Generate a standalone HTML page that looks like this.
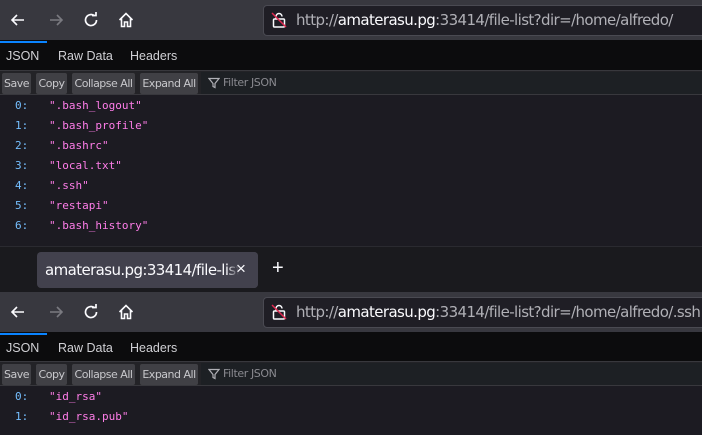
<!DOCTYPE html>
<html><head><style>
*{margin:0;padding:0;box-sizing:border-box}
body{width:702px;height:435px;overflow:hidden;background:#1c1b22;font-family:"Liberation Sans","DejaVu Sans",sans-serif;position:relative}
.abs{position:absolute}
.tb{left:0;width:702px;height:40px;background:#38383f}
.url{left:263px;width:445px;height:31px;background:#1f1e25;border:1px solid #4a4a52;border-radius:4px;color:#b0b0b6;font-size:15px;line-height:29px;padding-left:32px;white-space:nowrap;font-family:"DejaVu Sans",sans-serif;letter-spacing:-0.6px}
.url b{font-weight:normal;color:#fbfbfe}
.tabs{left:0;width:702px;height:30px;background:#0c0c0d;color:#d0d0d4;font-size:12.5px}
.tabs span{position:absolute;top:9px}
.bar{left:0;width:702px;height:25px;background:#232327;border-top:1px solid #38383d;border-bottom:1px solid #38383d}
.btn{position:absolute;top:2px;height:21px;background:#404045;color:#c8c8cc;font-size:11px;line-height:21px;text-align:center;border-radius:2px;font-family:"DejaVu Sans",sans-serif;letter-spacing:-0.5px}
.filter{position:absolute;left:201px;top:1px;right:0;height:22px;background:#1d2024;color:#8a8a90;font-size:11px;line-height:22px;padding-left:22px;font-family:"DejaVu Sans",sans-serif;letter-spacing:-0.4px}
.row{position:absolute;font-family:"DejaVu Sans Mono","Liberation Mono",monospace;font-size:11px;height:20px;line-height:20px}
.k{position:absolute;left:15px;color:#75bfff}
.v{position:absolute;left:49px;color:#ff7de9;white-space:nowrap}
svg{position:absolute}
</style></head><body>

<div class="abs tb" style="top:0"></div>
<svg style="left:8px;top:10px" width="20" height="20" viewBox="0 0 20 20" fill="none" stroke="#fbfbfe" stroke-width="1.6"><path d="M16 10H4M9 5L4 10L9 15"/></svg>
<svg style="left:46px;top:10px" width="20" height="20" viewBox="0 0 20 20" fill="none" stroke="#7a7a80" stroke-width="1.6"><path d="M4 10H16M11 5L16 10L11 15"/></svg>
<svg style="left:82px;top:11px" width="18" height="18" viewBox="0 0 18 18" fill="none" stroke="#fbfbfe" stroke-width="1.7"><path d="M14.5 9A5.5 5.5 0 1 1 12.5 4.8"/><path d="M10 4.5H14V1" /></svg>
<svg style="left:117px;top:11px" width="18" height="18" viewBox="0 0 18 18" fill="none" stroke="#fbfbfe" stroke-width="1.6"><path d="M2.5 9L9 2.5L15.5 9M4.5 7.5V15.5H7.5V11H10.5V15.5H13.5V7.5"/></svg>
<div class="abs url" style="top:5px">http://<b>amaterasu.pg</b>:33414/file-list?dir=/home/alfredo/</div>
<svg style="left:270px;top:11px" width="18" height="18" viewBox="0 0 18 18" fill="none" stroke-width="1.5"><rect x="3.5" y="8" width="11" height="8" rx="1" stroke="#fbfbfe"/><path d="M6 8V5.5a3 3 0 0 1 6 0" stroke="#fbfbfe"/><path d="M2 2L16 16" stroke="#e22850"/></svg>

<div class="abs tabs" style="top:40px"><div class="abs" style="left:0;top:1px;width:47px;height:2px;background:#0a84ff"></div><span style="left:6px">JSON</span><span style="left:58px">Raw Data</span><span style="left:130px">Headers</span></div>
<div class="abs bar" style="top:70px">
<div class="btn" style="left:2px;width:29px">Save</div>
<div class="btn" style="left:36px;width:31px">Copy</div>
<div class="btn" style="left:72px;width:63px">Collapse All</div>
<div class="btn" style="left:140px;width:58px">Expand All</div>
<div class="filter">Filter JSON</div>
<svg style="left:208px;top:6px" width="12" height="12" viewBox="0 0 12 12" fill="none" stroke="#b0b0b6" stroke-width="1.2"><path d="M1 1.5H11L7 6.5V10.5L5 9.5V6.5Z"/></svg>
</div>
<div class="row" style="top:96px"><span class="k">0:</span><span class="v">".bash_logout"</span></div>
<div class="row" style="top:116px"><span class="k">1:</span><span class="v">".bash_profile"</span></div>
<div class="row" style="top:136px"><span class="k">2:</span><span class="v">".bashrc"</span></div>
<div class="row" style="top:156px"><span class="k">3:</span><span class="v">"local.txt"</span></div>
<div class="row" style="top:176px"><span class="k">4:</span><span class="v">".ssh"</span></div>
<div class="row" style="top:196px"><span class="k">5:</span><span class="v">"restapi"</span></div>
<div class="row" style="top:216px"><span class="k">6:</span><span class="v">".bash_history"</span></div>

<div class="abs" style="top:246px;left:0;width:702px;height:46px;background:#1a1a1e;border-top:1px solid #2a2a30"></div>
<div class="abs" style="top:252px;left:37px;width:221px;height:36px;background:#42414d;border-radius:4px;color:#fbfbfe;font-size:15px;line-height:36px;padding-left:8px;white-space:nowrap;overflow:hidden;font-family:'DejaVu Sans',sans-serif;letter-spacing:-0.6px">amaterasu.pg:33414/file-list?</div>
<div class="abs" style="top:252px;left:226px;width:32px;height:36px;background:linear-gradient(90deg,rgba(66,65,77,0),#42414d 40%);border-radius:0 4px 4px 0"></div>
<div class="abs" style="top:259px;left:236px;color:#fbfbfe;font-size:17px">×</div>
<div class="abs" style="top:257px;left:272px;color:#fbfbfe;font-size:20px">+</div>

<div class="abs tb" style="top:292px"></div>
<svg style="left:8px;top:302px" width="20" height="20" viewBox="0 0 20 20" fill="none" stroke="#fbfbfe" stroke-width="1.6"><path d="M16 10H4M9 5L4 10L9 15"/></svg>
<svg style="left:46px;top:302px" width="20" height="20" viewBox="0 0 20 20" fill="none" stroke="#7a7a80" stroke-width="1.6"><path d="M4 10H16M11 5L16 10L11 15"/></svg>
<svg style="left:82px;top:303px" width="18" height="18" viewBox="0 0 18 18" fill="none" stroke="#fbfbfe" stroke-width="1.7"><path d="M14.5 9A5.5 5.5 0 1 1 12.5 4.8"/><path d="M10 4.5H14V1" /></svg>
<svg style="left:117px;top:303px" width="18" height="18" viewBox="0 0 18 18" fill="none" stroke="#fbfbfe" stroke-width="1.6"><path d="M2.5 9L9 2.5L15.5 9M4.5 7.5V15.5H7.5V11H10.5V15.5H13.5V7.5"/></svg>
<div class="abs url" style="top:297px">http://<b>amaterasu.pg</b>:33414/file-list?dir=/home/alfredo/.ssh</div>
<svg style="left:270px;top:303px" width="18" height="18" viewBox="0 0 18 18" fill="none" stroke-width="1.5"><rect x="3.5" y="8" width="11" height="8" rx="1" stroke="#fbfbfe"/><path d="M6 8V5.5a3 3 0 0 1 6 0" stroke="#fbfbfe"/><path d="M2 2L16 16" stroke="#e22850"/></svg>

<div class="abs tabs" style="top:332px"><div class="abs" style="left:0;top:1px;width:47px;height:2px;background:#0a84ff"></div><span style="left:6px">JSON</span><span style="left:58px">Raw Data</span><span style="left:130px">Headers</span></div>
<div class="abs bar" style="top:361px">
<div class="btn" style="left:2px;width:29px">Save</div>
<div class="btn" style="left:36px;width:31px">Copy</div>
<div class="btn" style="left:72px;width:63px">Collapse All</div>
<div class="btn" style="left:140px;width:58px">Expand All</div>
<div class="filter">Filter JSON</div>
<svg style="left:208px;top:6px" width="12" height="12" viewBox="0 0 12 12" fill="none" stroke="#b0b0b6" stroke-width="1.2"><path d="M1 1.5H11L7 6.5V10.5L5 9.5V6.5Z"/></svg>
</div>
<div class="row" style="top:387px"><span class="k">0:</span><span class="v">"id_rsa"</span></div>
<div class="row" style="top:407px"><span class="k">1:</span><span class="v">"id_rsa.pub"</span></div>
</body></html>
